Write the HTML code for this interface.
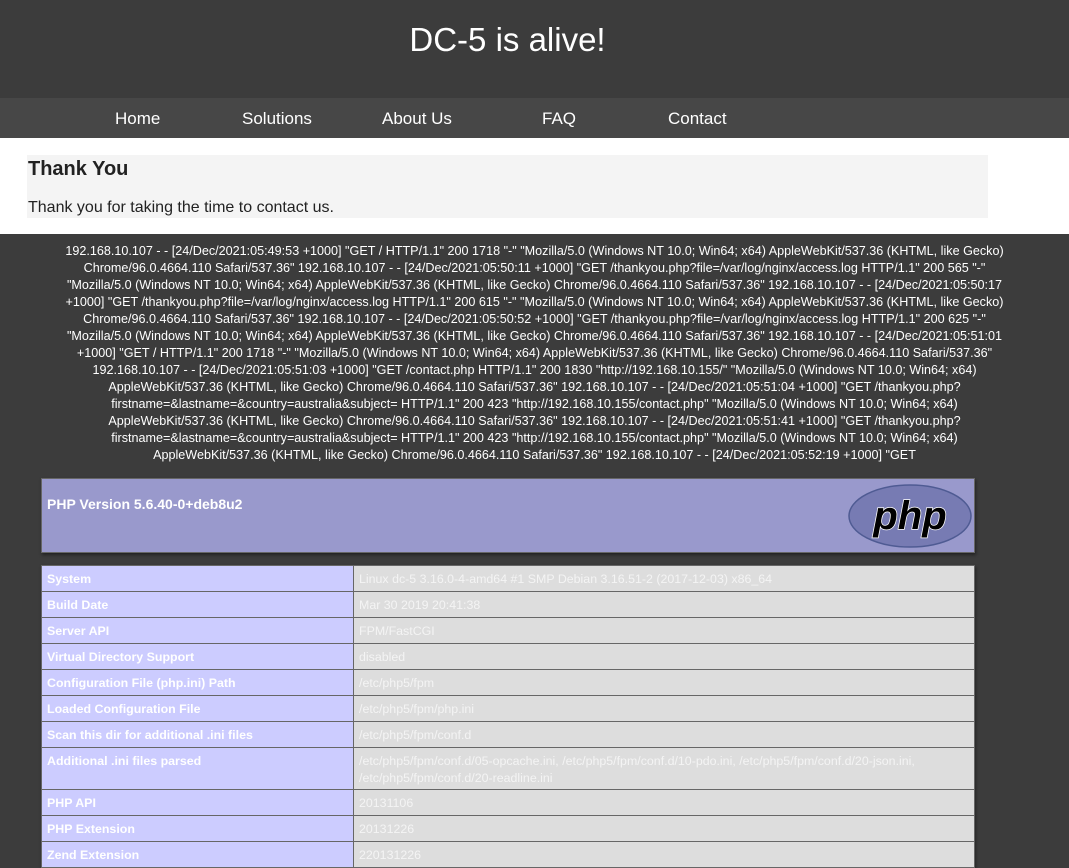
<!DOCTYPE html>
<html><head><meta charset="utf-8"><style>
*{margin:0;padding:0;box-sizing:border-box}
body{width:1069px;height:850px;overflow:hidden;background:#3c3c3c;font-family:"Liberation Sans",sans-serif;}
.hdr{height:98px;background:#3c3c3c;color:#fff;font-size:33px;text-align:center;padding-top:21px;padding-right:54px}
.nav{height:40px;background:#474747;position:relative;color:#fff;font-size:17px}
.nav span{position:absolute;top:11px}
.white{background:#fff;height:96px;padding-top:17px;position:relative}
.box{position:absolute;left:27px;top:17px;width:961px;height:63px;background:#f4f4f4}
.box h2{position:absolute;left:1px;top:3px;font-size:20px;color:#222}
.box p{position:absolute;left:1px;top:44px;font-size:16px;color:#222;white-space:nowrap}
.log{color:#fff;font-size:12.6px;line-height:17px;text-align:center;padding-top:9px}
.log div{white-space:nowrap}
.ph{position:absolute;left:41px;top:478px;width:934px;height:75px;background:#99c;border:1px solid #666;box-shadow:1px 2px 3px #222}
.ph h1{font-size:14px;color:#fff;font-weight:bold;position:absolute;left:5px;top:17px}
table{position:absolute;left:41px;top:565px;width:934px;border-collapse:collapse;font-size:12.4px;box-shadow:1px 2px 3px #222}
td{border:1px solid #666;height:26px;padding:5px 5px 2px;vertical-align:top;line-height:17px}
td.e{background:#ccf;color:#fff;font-weight:bold;width:312px}
td.v{background:#ddd;color:#f4f4f4}
</style></head><body>
<div class="hdr">DC-5 is alive!</div>
<div class="nav"><span style="left:115px">Home</span><span style="left:242px">Solutions</span><span style="left:382px">About Us</span><span style="left:542px">FAQ</span><span style="left:668px">Contact</span></div>
<div class="white"><div class="box"><h2>Thank You</h2><p>Thank you for taking the time to contact us.</p></div></div>
<div class="log">
<div>192.168.10.107 - - [24/Dec/2021:05:49:53 +1000] "GET / HTTP/1.1" 200 1718 "-" "Mozilla/5.0 (Windows NT 10.0; Win64; x64) AppleWebKit/537.36 (KHTML, like Gecko)</div>
<div>Chrome/96.0.4664.110 Safari/537.36" 192.168.10.107 - - [24/Dec/2021:05:50:11 +1000] "GET /thankyou.php?file=/var/log/nginx/access.log HTTP/1.1" 200 565 "-"</div>
<div>"Mozilla/5.0 (Windows NT 10.0; Win64; x64) AppleWebKit/537.36 (KHTML, like Gecko) Chrome/96.0.4664.110 Safari/537.36" 192.168.10.107 - - [24/Dec/2021:05:50:17</div>
<div>+1000] "GET /thankyou.php?file=/var/log/nginx/access.log HTTP/1.1" 200 615 "-" "Mozilla/5.0 (Windows NT 10.0; Win64; x64) AppleWebKit/537.36 (KHTML, like Gecko)</div>
<div>Chrome/96.0.4664.110 Safari/537.36" 192.168.10.107 - - [24/Dec/2021:05:50:52 +1000] "GET /thankyou.php?file=/var/log/nginx/access.log HTTP/1.1" 200 625 "-"</div>
<div>"Mozilla/5.0 (Windows NT 10.0; Win64; x64) AppleWebKit/537.36 (KHTML, like Gecko) Chrome/96.0.4664.110 Safari/537.36" 192.168.10.107 - - [24/Dec/2021:05:51:01</div>
<div>+1000] "GET / HTTP/1.1" 200 1718 "-" "Mozilla/5.0 (Windows NT 10.0; Win64; x64) AppleWebKit/537.36 (KHTML, like Gecko) Chrome/96.0.4664.110 Safari/537.36"</div>
<div>192.168.10.107 - - [24/Dec/2021:05:51:03 +1000] "GET /contact.php HTTP/1.1" 200 1830 "http://192.168.10.155/" "Mozilla/5.0 (Windows NT 10.0; Win64; x64)</div>
<div>AppleWebKit/537.36 (KHTML, like Gecko) Chrome/96.0.4664.110 Safari/537.36" 192.168.10.107 - - [24/Dec/2021:05:51:04 +1000] "GET /thankyou.php?</div>
<div>firstname=&amp;lastname=&amp;country=australia&amp;subject= HTTP/1.1" 200 423 "http://192.168.10.155/contact.php" "Mozilla/5.0 (Windows NT 10.0; Win64; x64)</div>
<div>AppleWebKit/537.36 (KHTML, like Gecko) Chrome/96.0.4664.110 Safari/537.36" 192.168.10.107 - - [24/Dec/2021:05:51:41 +1000] "GET /thankyou.php?</div>
<div>firstname=&amp;lastname=&amp;country=australia&amp;subject= HTTP/1.1" 200 423 "http://192.168.10.155/contact.php" "Mozilla/5.0 (Windows NT 10.0; Win64; x64)</div>
<div>AppleWebKit/537.36 (KHTML, like Gecko) Chrome/96.0.4664.110 Safari/537.36" 192.168.10.107 - - [24/Dec/2021:05:52:19 +1000] "GET</div>
</div>
<div class="ph"><h1>PHP Version 5.6.40-0+deb8u2</h1>
<svg style="position:absolute;left:806px;top:4px" width="124" height="66" viewBox="0 0 124 66"><ellipse cx="62" cy="33" rx="61" ry="31" fill="#777bb3" stroke="#4f5b93" stroke-width="1.5"/><text x="62" y="46" text-anchor="middle" font-family="Liberation Sans,sans-serif" font-size="40" font-weight="bold" font-style="italic" fill="#000" stroke="#fff" stroke-width="1.5" paint-order="stroke">php</text></svg>
</div>
<table>
<tr><td class="e">System</td><td class="v">Linux dc-5 3.16.0-4-amd64 #1 SMP Debian 3.16.51-2 (2017-12-03) x86_64</td></tr>
<tr><td class="e">Build Date</td><td class="v">Mar 30 2019 20:41:38</td></tr>
<tr><td class="e">Server API</td><td class="v">FPM/FastCGI</td></tr>
<tr><td class="e">Virtual Directory Support</td><td class="v">disabled</td></tr>
<tr><td class="e">Configuration File (php.ini) Path</td><td class="v">/etc/php5/fpm</td></tr>
<tr><td class="e">Loaded Configuration File</td><td class="v">/etc/php5/fpm/php.ini</td></tr>
<tr><td class="e">Scan this dir for additional .ini files</td><td class="v">/etc/php5/fpm/conf.d</td></tr>
<tr><td class="e">Additional .ini files parsed</td><td class="v">/etc/php5/fpm/conf.d/05-opcache.ini, /etc/php5/fpm/conf.d/10-pdo.ini, /etc/php5/fpm/conf.d/20-json.ini,<br>/etc/php5/fpm/conf.d/20-readline.ini</td></tr>
<tr><td class="e">PHP API</td><td class="v">20131106</td></tr>
<tr><td class="e">PHP Extension</td><td class="v">20131226</td></tr>
<tr><td class="e">Zend Extension</td><td class="v">220131226</td></tr>
</table>
</body></html>
